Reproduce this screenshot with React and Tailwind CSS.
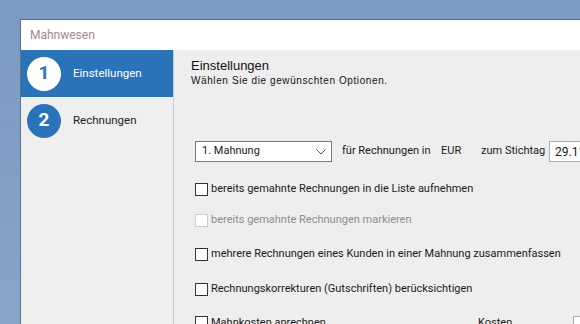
import React from "react";

const ui = { fontFamily: 'Roboto, "Noto Sans", sans-serif' };
const bitmap = { fontFamily: '"Liberation Sans", Arial, sans-serif' };

function Step({ n, label, active }) {
  return (
    <div
      className={
        "flex items-center h-[47px] pl-[6px] gap-[12px] " +
        (active ? "bg-[#2b73b8] text-white" : "text-[#222]")
      }
    >
      <div
        className={
          "w-[34px] h-[34px] rounded-full flex items-center justify-center text-[19px] font-bold " +
          (active ? "bg-white text-[#2b73b8]" : "bg-[#2b73b8] text-white")
        }
      >
        {n}
      </div>
      <span className="text-[11.5px]">{label}</span>
    </div>
  );
}

function Check({ label, disabled, className = "" }) {
  return (
    <div className={"flex items-center h-[13px] whitespace-nowrap " + className}>
      <div
        className={
          "w-[13px] h-[13px] shrink-0 border bg-white " +
          (disabled ? "border-[#cccccc]" : "border-[#333333]")
        }
      />
      <span className={"ml-[3px] text-[11px] " + (disabled ? "text-[#8d8d8d]" : "text-[#1a1a1a]")}>
        {label}
      </span>
    </div>
  );
}

export default function App() {
  return (
    <div className="w-[580px] h-[324px] overflow-hidden bg-gradient-to-b from-[#7b9ac2] to-[#87a4c9] flex flex-col pl-[20px] pt-[19px]" style={ui}>
      <div className="flex-1 flex flex-col border-t border-l border-[#5f748c] bg-white min-w-0">
        {/* Title bar */}
        <div className="h-[30px] shrink-0 flex items-center pl-[9px] text-[12px] text-[#9b8a93]">Mahnwesen</div>

        <div className="flex-1 flex min-h-0">
          {/* Sidebar */}
          <div className="w-[153px] shrink-0 bg-[#efefef] border-r border-[#c6ced9] flex flex-col">
            <Step n="1" label="Einstellungen" active />
            <Step n="2" label="Rechnungen" />
          </div>

          {/* Content */}
          <div className="flex-1 bg-[#eeeeee] flex flex-col pl-[17px] pt-[8px] min-w-0 overflow-hidden">
            <div className="text-[13px] text-[#111] leading-[16px]" style={bitmap}>Einstellungen</div>
            <div className="text-[10px] tracking-[0.6px] text-[#111] leading-[14px]" style={bitmap}>
              Wählen Sie die gewünschten Optionen.
            </div>

            <div className="flex flex-col pl-[4px] mt-[53px]">
              <div className="flex items-center h-[21px] whitespace-nowrap text-[11px] text-[#1a1a1a]">
                <div className="w-[137px] h-[21px] shrink-0 bg-white border border-[#7a7a7a] flex items-center justify-between pl-[6px] pr-[5px]">
                  <span>1. Mahnung</span>
                  <svg width="10" height="6" viewBox="0 0 10 6" fill="none" stroke="#555" strokeWidth="1">
                    <path d="M0.5 0.5 L5 5 L9.5 0.5" />
                  </svg>
                </div>
                <span className="ml-[10px] w-[99px] shrink-0">für Rechnungen in</span>
                <span className="w-[40px] shrink-0">EUR</span>
                <span className="w-[68px] shrink-0">zum Stichtag</span>
                <div className="w-[60px] h-[21px] shrink-0 bg-white border border-[#adadad] flex items-center pl-[5px] text-[12px]">
                  29.11.2023
                </div>
              </div>

              <Check className="mt-[21px]" label="bereits gemahnte Rechnungen in die Liste aufnehmen" />
              <Check className="mt-[18px]" label="bereits gemahnte Rechnungen markieren" disabled />
              <Check className="mt-[21px]" label="mehrere Rechnungen eines Kunden in einer Mahnung zusammenfassen" />
              <Check className="mt-[22px]" label="Rechnungskorrekturen (Gutschriften) berücksichtigen" />
              <div className="flex items-start h-[20px] mt-[20px] whitespace-nowrap">
                <div className="w-[13px] h-[13px] shrink-0 border border-[#333333] bg-white" />
                <span className="ml-[3px] w-[267px] shrink-0 text-[11px] leading-[13px] text-[#1a1a1a]">Mahnkosten anrechnen</span>
                <span className="w-[95px] shrink-0 text-[11px] leading-[13px] text-[#1a1a1a]">Kosten</span>
                <div className="w-[40px] h-[20px] shrink-0 bg-white border border-[#adadad]" />
              </div>
            </div>
          </div>
        </div>
      </div>
    </div>
  );
}
